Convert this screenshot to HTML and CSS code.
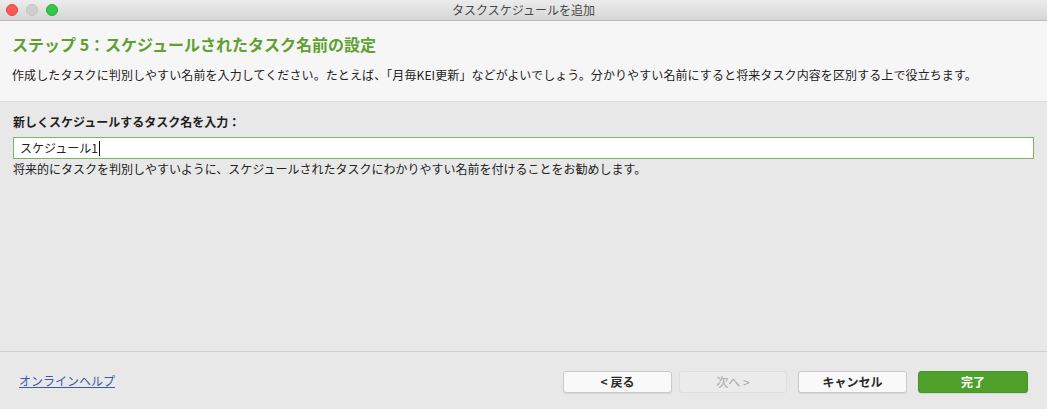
FILE: index.html
```html
<!DOCTYPE html>
<html lang="ja">
<head>
<meta charset="utf-8">
<link rel="stylesheet" href="styles.css">
</head>
<body>
<div class="window">
  <div class="titlebar">
    <div class="lights">
      <span class="light red"></span>
      <span class="light gray"></span>
      <span class="light green"></span>
    </div>
    <div class="wintitle">タスクスケジュールを追加</div>
  </div>
  <div class="header">
    <h1 class="step">ステップ 5：スケジュールされたタスク名前の設定</h1>
    <p class="desc">作成したタスクに判別しやすい名前を入力してください。たとえば、「月毎KEI更新」などがよいでしょう。分かりやすい名前にすると将来タスク内容を区別する上で役立ちます。</p>
  </div>
  <div class="main">
    <label class="label">新しくスケジュールするタスク名を入力：</label>
    <div class="input"><span>スケジュール1</span><span class="caret"></span></div>
    <p class="hint">将来的にタスクを判別しやすいように、スケジュールされたタスクにわかりやすい名前を付けることをお勧めします。</p>
  </div>
  <div class="footer">
    <a class="help" href="#">オンラインヘルプ</a>
    <div class="buttons">
      <button class="btn">&lt; 戻る</button>
      <button class="btn disabled">次へ &gt;</button>
      <button class="btn cancel">キャンセル</button>
      <button class="btn primary">完了</button>
    </div>
  </div>
</div>
</body>
</html>
```
FILE: styles.css
```css
* { box-sizing: border-box; }
html, body { margin: 0; padding: 0; }
body {
  width: 1047px;
  height: 409px;
  overflow: hidden;
  font-family: "Noto Sans CJK JP", "Noto Sans", sans-serif;
  color: #222;
  background: #e8e8e8;
}
.window { display: flex; flex-direction: column; height: 409px; }
.titlebar {
  height: 21px;
  flex: none;
  display: flex;
  align-items: center;
  position: relative;
  background: linear-gradient(#ececec, #d6d6d6);
  border-bottom: 1px solid #b8b8b8;
}
.lights { display: flex; gap: 8px; padding-left: 6px; }
.light { width: 12px; height: 12px; border-radius: 50%; display: block; }
.light.red { background: #fc5b57; border: 1px solid #e2463f; }
.light.gray { background: #d0d0d0; border: 1px solid #c2c2c2; }
.light.green { background: #34c748; border: 1px solid #2aa83b; }
.wintitle {
  position: absolute;
  left: 0; right: 0; top: 0;
  text-align: center;
  font-size: 12px;
  line-height: 20px;
  color: #4a4a4a;
}
.header {
  height: 81px;
  flex: none;
  background: #f6f6f6;
  border-bottom: 1px solid #dedede;
  padding: 12px 12px 0;
}
.step {
  margin: 0;
  font-size: 16px;
  line-height: 22px;
  font-weight: bold;
  color: #5fa030;
}
.desc {
  margin: 11px 0 0;
  font-size: 12px;
  line-height: 18px;
  color: #222;
  letter-spacing: 0.1px;
}
.main {
  flex: 1;
  padding: 11px 13px 0 13px;
  display: flex;
  flex-direction: column;
}
.label {
  font-size: 12px;
  font-weight: bold;
  line-height: 18px;
  color: #1e1e1e;
}
.input {
  margin-top: 6px;
  width: 1021px;
  height: 22px;
  background: #fff;
  border: 1px solid #7db660;
  font-size: 12px;
  line-height: 20px;
  padding-left: 6px;
  display: flex;
  align-items: center;
}
.caret { display: inline-block; width: 1px; height: 15px; background: #111; margin-left: 1px; }
.hint {
  margin: 1px 0 0;
  font-size: 12px;
  line-height: 18px;
  color: #222;
}
.footer {
  height: 58px;
  flex: none;
  border-top: 1px solid #d0d0d0;
  display: flex;
  align-items: center;
  justify-content: space-between;
  padding: 0 19px 0 19px;
}
.help {
  font-size: 12px;
  color: #3a5ca8;
  text-decoration: underline;
  margin-top: -1px;
}
.buttons { display: flex; align-items: center; gap: 11px; margin-top: 2px; }
.btn {
  width: 109px;
  height: 22px;
  border-radius: 3px;
  border: 1px solid #cacaca;
  background: #f9f9f9;
  font-family: "Noto Sans CJK JP", "Noto Sans", sans-serif;
  font-size: 12px;
  font-weight: bold;
  color: #2a2a2a;
  box-shadow: 0 1px 1px rgba(0,0,0,0.08);
  padding: 0;
}
.btn.disabled {
  margin-left: -4px;
  width: 108px;
  background: #ebebeb;
  border-color: #dedede;
  color: #a8a8a8;
  font-weight: normal;
  box-shadow: none;
}
.btn.primary {
  width: 110px;
  background: #4f9f2b;
  border-color: #479427;
  color: #fff;
}
```
